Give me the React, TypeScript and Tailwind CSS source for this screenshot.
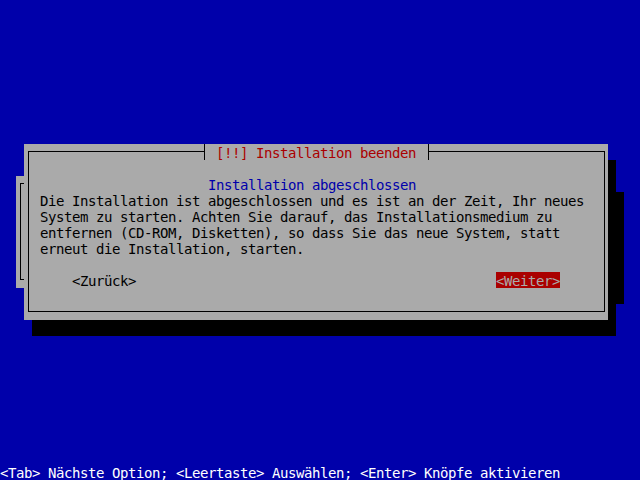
import React from 'react';

// 80x30 text console: every cell is 8px wide and 16px tall
const cell = "font-['DejaVu_Sans_Mono',monospace] text-[14px] leading-4 tracking-[-0.43px]";

const bodyLines = [
  'Die Installation ist abgeschlossen und es ist an der Zeit, Ihr neues',
  'System zu starten. Achten Sie darauf, das Installationsmedium zu',
  'entfernen (CD-ROM, Disketten), so dass Sie das neue System, statt',
  'erneut die Installation, starten.',
];

export default function App() {
  return (
    <div className={`relative flex h-[480px] w-[640px] flex-col overflow-hidden bg-[#0000aa] ${cell}`}>
      {/* the previous dialog, still peeking out behind */}
      <div className="absolute left-[16px] top-[176px] h-[112px] w-[600px] bg-[#aaaaaa] shadow-[8px_16px_0_0_#000]">
        <div className="ml-[4px] mt-[7px] h-[97px] w-[580px] border border-black" />
      </div>

      <div className="relative ml-[24px] mt-[144px] h-[176px] w-[584px] bg-[#aaaaaa] pl-[4px] pt-[7px] shadow-[8px_16px_0_0_#000]">
        <div className="h-[161px] w-[577px] border border-black pl-[11px] pt-[24px]">
          <p className="ml-[168px] h-4 whitespace-pre pt-px text-[#0000aa]">Installation abgeschlossen</p>
          {bodyLines.map((line) => (
            <p key={line} className="h-4 whitespace-pre pt-px text-black">
              {line}
            </p>
          ))}
          <div className="mt-4 flex">
            <span className="ml-[32px] h-4 w-[64px] whitespace-pre pt-px text-black">&lt;Zurück&gt;</span>
            <span className="ml-[360px] h-4 w-[64px] whitespace-pre bg-[#aa0000] pt-px text-[#aaaaaa]">&lt;Weiter&gt;</span>
          </div>
        </div>
        <div className="absolute left-[180px] top-0 h-4 w-[225px] whitespace-pre border-x border-black bg-[#aaaaaa] pl-[11px] pt-px text-[#aa0000]">
          [!!] Installation beenden
        </div>
      </div>

      <p className="mt-auto h-4 whitespace-pre pt-px text-white">
        &lt;Tab&gt; Nächste Option; &lt;Leertaste&gt; Auswählen; &lt;Enter&gt; Knöpfe aktivieren
      </p>
    </div>
  );
}
